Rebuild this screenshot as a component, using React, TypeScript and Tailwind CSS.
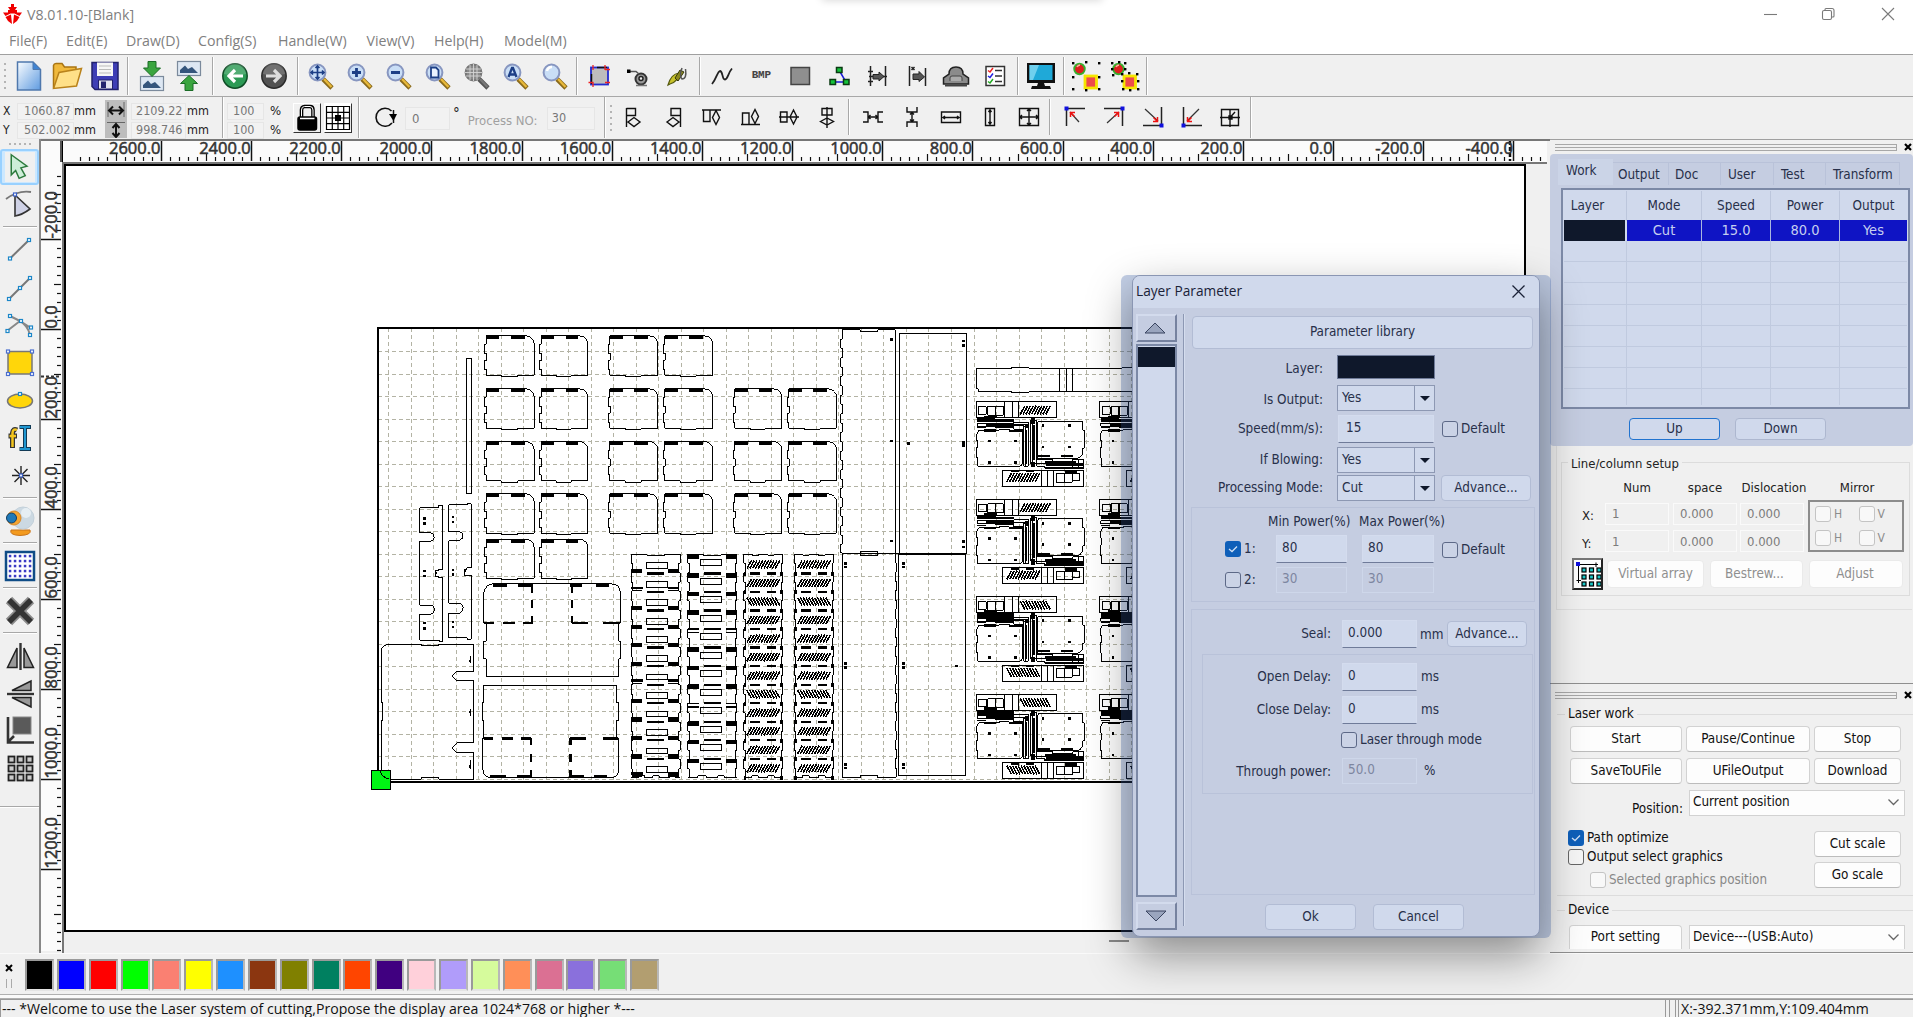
import React from "react";

type Kids = { children?: React.ReactNode };

/* ---------- shared helpers ---------- */

const Ico = ({ children, s = 32, className = "" }: Kids & { s?: number; className?: string }) => (
  <svg width={s} height={s} viewBox="0 0 32 32" className={"shrink-0 " + className} fill="none" stroke="#000" strokeWidth={1.5}>
    {children}
  </svg>
);

const Group = ({ children, className = "" }: Kids & { className?: string }) => (
  <div className={"flex h-full shrink-0 items-center " + className}>
    {React.Children.map(children, (c) => (
      <div className="flex flex-1 items-center justify-center">{c}</div>
    ))}
  </div>
);

const VSep = ({ className = "" }: { className?: string }) => (
  <div className={"w-[2px] shrink-0 border-l border-[#a8a8a8] bg-white " + className} />
);

const Dots = () => (
  <div className="flex h-full w-[10px] shrink-0 flex-col items-center justify-center gap-[4px]">
    {[0, 1, 2, 3, 4].map((i) => (
      <div key={i} className="h-[2px] w-[2px] bg-[#b4b4b4]" />
    ))}
  </div>
);

/* ---------- main toolbar icons ---------- */

const Magnifier = ({ kind }: { kind: string }) => {
  const gray = kind === "gray";
  const ink = "#1d3f86";
  return (
    <Ico>
      <path d="M18 19 L27 28" stroke={gray ? "#555" : "#8a6a1c"} strokeWidth={4.600} />
      <path d="M19 19 L26.500 27" stroke={gray ? "#777" : "#e8b93a"} strokeWidth={2.300} />
      <circle cx="12.500" cy="12.500" r="7.900" fill={gray ? "#8a8a8a" : "#c9def6"} stroke={gray ? "#777" : "#8796c0"} strokeWidth={2} />
      {kind === "move" && <path d="M12.500 6V19M6 12.500H19M10.500 8l2-2 2 2M10.500 17l2 2 2-2M8 10.500l-2 2 2 2M17 10.500l2 2-2 2" stroke={ink} strokeWidth={1.700} />}
      {kind === "plus" && <path d="M12.500 8V17M8 12.500H17" stroke={ink} strokeWidth={2.800} />}
      {kind === "minus" && <path d="M8 12.500H17" stroke={ink} strokeWidth={3} />}
      {kind === "page" && <path d="M9 7.500h5l2.500 2.500v7.500H9z" fill="#eaf3ff" stroke={ink} strokeWidth={1.800} />}
      {gray && <path d="M9 5V20M12.500 4V21M16 5V20M5 9H20M4 12.500H21M5 16H20" stroke="#d5d5d5" strokeWidth={0.900} />}
      {kind === "A" && <path d="M8.500 17 L12 8H13L16.500 17M10 14.500H15" stroke={ink} strokeWidth={2.300} />}
      {kind === "plain" && <path d="M8 11a5 5 0 0 1 5-4" stroke="#fff" strokeWidth={2.500} />}
    </Ico>
  );
};

const NewIcon = () => (
  <Ico>
    <defs>
      <linearGradient id="nw" x1="0" y1="0" x2="1" y2="1"><stop offset="0" stopColor="#fafdff" /><stop offset="1" stopColor="#5f9be0" /></linearGradient>
    </defs>
    <path d="M4.500 2H20L27.500 9.500V30H4.500Z" fill="url(#nw)" stroke="#4f78ad" />
    <path d="M20 2V9.500H27.500Z" fill="#3f83d2" stroke="#4f78ad" strokeWidth={1} />
  </Ico>
);
const OpenIcon = () => (
  <Ico>
    <path d="M2.500 28V5.500Q3 3.500 5 3.500H11L13.500 7H25V12" fill="#f0b93c" stroke="#a97412" />
    <path d="M2.500 28.500 8 12.500 30.500 8.500 25.500 26Z" fill="#ffe088" stroke="#b9821b" />
  </Ico>
);
const SaveIcon = () => (
  <Ico>
    <path d="M3 2.500H29V29.500H6L3 26.500Z" fill="#3d3db5" stroke="#20206c" />
    <path d="M8 2.500H24V16H8Z" fill="#f6f6f6" stroke="none" />
    <path d="M10 6H22M10 9.500H22M10 13H22" stroke="#bbb" strokeWidth={1} />
    <path d="M9.500 20H23.500V29H9.500Z" fill="#e3e3ef" stroke="#20206c" strokeWidth={1} />
    <path d="M12 21.500H17V28H12Z" fill="#23236e" stroke="none" />
  </Ico>
);
const Photo = ({ y }: { y: number }) => (
  <g transform={`translate(0 ${y})`}>
    <rect x="4.500" y="0.500" width="23" height="14" fill="#dde7f3" stroke="#7b8a9c" strokeWidth={1.200} />
    <path d="M7 12V9L12 4.500 15 8 19 6 25 12Z" fill="#34557c" stroke="none" />
  </g>
);
const ImportIcon = () => (
  <Ico>
    <Photo y={16} />
    <path d="M12 1.500H20V8H24.500L16 16.500 7.500 8H12Z" fill="#3aa53f" stroke="#1b6c26" strokeWidth={1} />
  </Ico>
);
const ExportIcon = () => (
  <Ico>
    <Photo y={1} />
    <path d="M12 30.500H20V23.500H24.500L16 15.500 7.500 23.500H12Z" fill="#3aa53f" stroke="#1b6c26" strokeWidth={1} />
  </Ico>
);
const Round = ({ back }: { back?: boolean }) => (
  <Ico>
    <circle cx="16" cy="16" r="12.200" fill={back ? "#2c9a55" : "#525252"} stroke={back ? "#0f4d26" : "#2b2b2b"} strokeWidth={1.500} />
    <path d="M5 14a11 11 0 0 1 22 0Q16 17 5 14" fill="#fff" opacity=".18" stroke="none" />
    <path d={back ? "M24 16H10M16 10 10 16 16 22" : "M8 16H22M16 10 22 16 16 22"} stroke={back ? "#fff" : "#ddd"} strokeWidth={3.200} />
  </Ico>
);
const HandleRect = () => (
  <Ico>
    <rect x="8" y="7.500" width="17" height="17" fill="#bdbdbd" stroke="#222bd0" strokeWidth={1.800} />
    <path d="M8.500 24V14M14 7.500H24" stroke="#111" />
    <path d="M10 5V10M22 5V10M10 22V27M5.500 22.500H10.500M22 9.500H27M22 22.500H27" stroke="#e22" strokeWidth={1.300} />
  </Ico>
);
const GearIcon = () => (
  <Ico>
    <circle cx="19" cy="19" r="5.500" fill="#999" stroke="#333" strokeWidth={2} />
    <circle cx="19" cy="18.500" r="2" fill="#eee" stroke="#222" />
    <path d="M7 11.500H14L17 14" stroke="#555" />
    <rect x="5" y="9.500" width="3.500" height="3.500" fill="#000" stroke="none" />
    <path d="M14 25.500H25" stroke="#777" strokeWidth={1.500} />
  </Ico>
);
const PenIcon = () => (
  <Ico>
    <path d="M7 25 Q10 14 18 13 Q18 21 9 24Z" fill="#c8c22a" stroke="#555a10" strokeWidth={1.200} />
    <path d="M14 18 L19 10 L23 12 L17 21Z" fill="#8d8a1c" stroke="#33360c" strokeWidth={1} />
    <path d="M21 8Q18 16 21 19Q26 19 24.500 9" stroke="#555" strokeWidth={1.500} />
  </Ico>
);
const CurveIcon = () => <Ico><path d="M6 24C11 18 11 12 14 11C17 11 16 20 19 19.500C22 19 22 13 26 8.500" stroke="#222" strokeWidth={1.800} /></Ico>;
const SquareIcon = () => <Ico><rect x="7" y="7.500" width="18.500" height="17" fill="#8f8f8f" stroke="#444" /></Ico>;
const NodesIcon = () => (
  <Ico>
    <path d="M16 10 L23 22 H8" stroke="#1b1bd8" strokeWidth={1.500} />
    {[[16, 10], [9.500, 22], [23, 22]].map(([x, y]) => (
      <rect key={x} x={x - 2.500} y={y - 2.500} width="5.500" height="5" fill="#16c33c" stroke="#0a3a12" strokeWidth={1.500} />
    ))}
  </Ico>
);
const PassIcon = ({ one }: { one?: boolean }) => (
  <Ico>
    {one ? (
      <>
        <path d="M8.500 6V26M24.500 8V26M10.500 7l3 3M13.500 7l-3 3" stroke="#222" />
        <path d="M12 14H18V11.500L23.500 17 18 21.500V19.500H12Z" fill="#555" stroke="#222" strokeWidth={1} />
      </>
    ) : (
      <>
        <path d="M8.500 6V26M23.500 6V26M7 16.500H25" stroke="#222" />
        <path d="M11 14.500H17V12L22 16.500 17 21V19H11Z" fill="#555" stroke="#222" strokeWidth={1} />
        <path d="M6 11.500h5M6 21.500h5" stroke="#222" />
      </>
    )}
  </Ico>
);
const CarIcon = () => (
  <Ico>
    <path d="M9 14Q9 7 16 7Q23 7 23 14L28.500 18V24H3.500V18Z" fill="#8b8b8b" stroke="#222" />
    <path d="M10 21V18Q10 16 12 16H20Q22 16 22 18V21" fill="#aaa" stroke="#444" strokeWidth={1} />
    <path d="M5 25.500h22" strokeWidth={2} stroke="#444" />
  </Ico>
);
const ListIcon = () => (
  <Ico>
    <rect x="7" y="6.500" width="18.500" height="19" fill="#fff" stroke="#333" />
    <path d="M16 10.500H23M16 16H23M16 21.500H23" stroke="#333" />
    <path d="M9 10.500l2 1.500 3-4" stroke="#e22" /><path d="M9 16l2 1.500 3-4" stroke="#22d" /><path d="M9 21.500l2 1.500 3-4" stroke="#2a2" />
  </Ico>
);
const MonitorIcon = () => (
  <Ico>
    <path d="M2 3H30V23H2Z" fill="#111" stroke="none" />
    <path d="M4.500 5H27.500V20H4.500Z" fill="#1fa9d8" stroke="none" />
    <path d="M4.500 5H14L8 20H4.500Z" fill="#6fd0ee" stroke="none" />
    <path d="M13 23H19L20 26H25L26 29H6L7 26H12Z" fill="#111" stroke="none" />
  </Ico>
);
const GroupIcon = ({ split }: { split?: boolean }) => (
  <Ico>
    <circle cx="9.500" cy="9" r="5.300" fill="#dd1f1f" stroke="#35b02d" strokeWidth={1.800} />
    <path d="M7 7a4 4 0 0 1 3-2" stroke="#ffb3a0" />
    <rect x="15" y="16" width="11.500" height="12" fill="#ee4b4b" stroke="#f5e600" strokeWidth={2.800} />
    {(split
      ? [[3, 3], [10, 2], [16, 3], [3, 9], [16, 9], [4, 15], [13, 14], [20, 13], [28, 14], [13, 21], [29, 21], [14, 29], [21, 30], [29, 29]]
      : [[3, 3], [16, 2], [29, 3], [3, 17], [29, 17], [3, 29], [16, 30], [29, 29]]
    ).map(([x, y]) => (
      <rect key={`${x}-${y}`} x={x - 1} y={y - 1} width="2.400" height="2.400" fill="#000" stroke="none" />
    ))}
  </Ico>
);

const MainToolbar = () => (
  <div className="flex h-[42px] shrink-0 items-center border-t border-[#a0a0a0] bg-[#f0f0f0]">
    <Dots />
    <Group className="w-[114px]"><NewIcon /><OpenIcon /><SaveIcon /></Group>
    <VSep className="ml-[3px] h-[38px]" />
    <Group className="ml-[4px] w-[74px]"><ImportIcon /><ExportIcon /></Group>
    <VSep className="ml-[5px] h-[38px]" />
    <Group className="ml-[1px] w-[78px]"><Round back /><Round /></Group>
    <VSep className="ml-[4px] h-[38px]" />
    <Group className="ml-[2px] w-[273px]">
      <Magnifier kind="move" /><Magnifier kind="plus" /><Magnifier kind="minus" /><Magnifier kind="page" />
      <Magnifier kind="gray" /><Magnifier kind="A" /><Magnifier kind="plain" />
    </Group>
    <VSep className="ml-[2px] h-[38px]" />
    <Group className="ml-[2px] w-[116px]"><HandleRect /><GearIcon /><PenIcon /></Group>
    <VSep className="ml-[3px] h-[38px]" />
    <Group className="ml-[2px] w-[311px]">
      <CurveIcon />
      <span className="font-['Liberation_Mono',monospace] text-[11px] font-bold tracking-[-0.2px] text-[#444]">BMP</span>
      <SquareIcon /><NodesIcon /><PassIcon /><PassIcon one /><CarIcon /><ListIcon />
    </Group>
    <VSep className="ml-[3px] h-[38px]" />
    <Group className="w-[44px]"><MonitorIcon /></Group>
    <VSep className="h-[38px]" />
    <Group className="ml-[1px] w-[78px]"><GroupIcon /><GroupIcon split /></Group>
    <VSep className="ml-[2px] h-[38px]" />
  </div>
);

/* ---------- property toolbar ---------- */

const Lines = ({ d, fill = "none" }: { d: string; fill?: string }) => (
  <Ico><path d={d} stroke="#111" strokeWidth={1.400} fill={fill} /></Ico>
);
const Corner = ({ frame, arrow, dot }: { frame: string; arrow: string; dot: [number, number] }) => (
  <Ico>
    <path d={frame} stroke="#222" />
    <path d={arrow} stroke="#333" strokeWidth={1.200} />
    <g transform={`translate(${dot[0] < 16 ? dot[0] + 4 : dot[0] - 4} ${dot[1] < 16 ? dot[1] + 4 : dot[1] - 4}) scale(${dot[0] < 16 ? 1 : -1} ${dot[1] < 16 ? 1 : -1})`}>
      <path d="M0 4.500V0H4.500M0 0L4 4" stroke="#e11" strokeWidth={1.500} />
    </g>
    <rect x={dot[0] - 2} y={dot[1] - 2} width="4" height="4" fill="#11d" stroke="none" />
  </Ico>
);

const NumBox = ({ children, className = "" }: Kids & { className?: string }) => (
  <div className={"flex shrink-0 items-center whitespace-nowrap border border-[#e6e6e6] bg-[#f2f2f2] text-[#777] " + className}>{children}</div>
);

const PropertyBar = () => (
  <div className="flex h-[43px] shrink-0 border-t border-[#a8a8a8] bg-[#f0f0f0] text-[13px] text-[#222]">
    <div className="flex w-[222px] shrink-0 text-[12.5px]">
      <div className="flex w-[105px] flex-col gap-px pt-[5px]">
        <div className="flex h-[18px] items-center"><span className="ml-[3px] w-[14px] text-[12px]">X</span><NumBox className="h-[17px] w-[57px] pl-[6px]">1060.87</NumBox><span>mm</span></div>
        <div className="flex h-[18px] items-center"><span className="ml-[3px] w-[14px] text-[12px]">Y</span><NumBox className="h-[17px] w-[57px] pl-[6px]">502.002</NumBox><span>mm</span></div>
      </div>
      <div className="mt-[3px] h-[38px] w-[22px] bg-[#bdbdbd]">
        <svg width="22" height="38" fill="none" stroke="#111" strokeWidth="2">
          <path d="M3 2V17M19 2V17" strokeWidth="1" stroke="#666" />
          <path d="M4 10.500H18M8 6.500L4 10.500L8 14.500M14 6.500L18 10.500L14 14.500" />
          <path d="M2 22.500H20" strokeWidth="1" stroke="#666" />
          <path d="M11 24V37M7.500 28L11 24L14.500 28M7.500 33L11 37L14.500 33" />
        </svg>
      </div>
      <div className="flex flex-col gap-px pt-[5px]">
        <div className="flex h-[18px] items-center"><NumBox className="ml-[4px] h-[17px] w-[55px] pl-[4px]">2109.22</NumBox><span className="ml-px">mm</span></div>
        <div className="flex h-[18px] items-center"><NumBox className="ml-[4px] h-[17px] w-[55px] pl-[4px]">998.746</NumBox><span className="ml-px">mm</span></div>
      </div>
    </div>
    <VSep className="h-[41px]" />
    <div className="flex w-[64px] shrink-0 flex-col gap-px pt-[5px]">
      {[0, 1].map((i) => (
        <div key={i} className="flex h-[18px] items-center"><NumBox className="ml-[3px] h-[17px] w-[37px] pl-[5px] text-[12.5px]">100</NumBox><span className="ml-[6px]">%</span></div>
      ))}
    </div>
    <div className="mt-[6px] ml-[5px] flex h-[30px] w-[28px] shrink-0 items-center justify-center border border-t-white border-r-[#333] border-b-[#333] border-l-white bg-[#f0f0f0]">
      <svg width="26" height="28" fill="none" stroke="#000" strokeWidth="1.500">
        <path d="M7.500 13V6Q7.500 2.500 10.500 2.500H16Q19 2.500 19 6V13" strokeWidth="3.600" />
        <path d="M7.500 13V6Q7.500 2.500 10.500 2.500H16Q19 2.500 19 6V13" stroke="#fff" strokeWidth="1" />
        <rect x="4" y="13" width="18.500" height="13" rx="2" fill="#000" />
        <path d="M6 14.500H20.500" stroke="#fff" />
      </svg>
    </div>
    <div className="mt-[6px] ml-[3px] flex h-[30px] w-[28px] shrink-0 items-center justify-center border border-t-white border-r-[#333] border-b-[#333] border-l-white bg-white">
      <svg width="26" height="28" fill="none" stroke="#000" strokeWidth="1.200">
        <path d="M1.500 2.500H24.500V25.500H1.500ZM7.300 2.500V25.500M13 2.500V25.500M18.700 2.500V25.500M1.500 8.300H24.500M1.500 14H24.500M1.500 19.700H24.500" />
        <rect x="10" y="11" width="6" height="6" fill="#000" stroke="none" />
      </svg>
    </div>
    <VSep className="ml-[6px] h-[41px]" />
    <Ico className="mt-[4px] ml-[9px]">
      <path d="M22.500 10A9 9 0 1 0 23 22" stroke="#111" strokeWidth={1.600} />
      <path d="M24.500 9V22" stroke="#111" strokeWidth={1.500} />
      <path d="M20 13H28L24.500 20Z" fill="#000" stroke="none" />
    </Ico>
    <NumBox className="mt-[10px] ml-[4px] h-[23px] w-[45px] pl-[6px] text-[13px]">0</NumBox>
    <span className="mt-[6px] ml-[3px] text-[15px]">°</span>
    <span className="mt-[14px] ml-[8px] w-[79px] whitespace-nowrap text-[13px] text-[#a0a0a0]">Process NO:</span>
    <NumBox className="mt-[10px] h-[23px] w-[48px] pl-[4px] text-[12.5px]">30</NumBox>
    <VSep className="ml-[9px] h-[41px]" />
    <Dots />
    <Group className="-ml-[1px] w-[232px] pb-[3px]">
      <Lines d="M8.500 7V26M8.500 7.500H17.500V14.500H8.500M10 21L16 16.500L22 21L16 25.500Z" />
      <Lines d="M23.500 7V26M23.500 7.500H14V14.500H23.500M10 21L16 16.500L22 21L16 25.500Z" />
      <Lines d="M7 9H26M8.500 9V20.500H15V9M21 9.500L17.500 16.500L21 23.500L24.500 16.500Z" />
      <Lines d="M7 23.500H26M8.500 23V12H15V23M21 8.500L17.500 15.500L21 22.500L24.500 15.500Z" />
      <Lines d="M6 16H26M7.500 11H14V21H7.500ZM20.500 9L17 16L20.500 23L24 16Z" />
      <Lines d="M16 6V27M11 7.500H21V14H11ZM9.500 20.500L16 17L22.500 20.500L16 24Z" />
    </Group>
    <VSep className="mt-[2px] ml-[1px] h-[36px]" />
    <Group className="ml-[4px] w-[195px] pb-[3px]">
      <Lines d="M6 11H11V21H6M26 11H21V21H26M11 16H21M13.500 14L11.500 16L13.500 18M18.500 14L20.500 16L18.500 18" />
      <Lines d="M11 6V11H21V6M11 26V21H21V26M16 11V21M14 13.500L16 11.500L18 13.500M14 18.500L16 20.500L18 18.500" />
      <Lines d="M6.500 11H25.500V21.500H6.500ZM8 16.500H24M10 15L8 16.500L10 18M22 15L24 16.500L22 18" />
      <Lines d="M11.500 7.500H20.500V24.500H11.500ZM16 9V23M14.500 11L16 9L17.500 11M14.500 21L16 23L17.500 21" />
      <Lines d="M6.500 7.500H25.500V24.500H6.500ZM16 8V24M7 16H25M14 10L16 8L18 10M14 22L16 24L18 22M9 14L7 16L9 18M23 14L25 16L23 18" />
    </Group>
    <VSep className="mt-[2px] h-[36px]" />
    <Group className="ml-[5px] w-[194px] pb-[3px]">
      <Corner frame="M7.500 25V7.500H26" arrow="M11 11L20 21" dot={[7.500, 7.500]} />
      <Corner frame="M24.500 25V7.500H6" arrow="M21 11L9 22" dot={[24.500, 7.500]} />
      <Corner frame="M24.500 6V24.500H6" arrow="M8 8L21 20" dot={[24.500, 24.500]} />
      <Corner frame="M7.500 6V24.500H26" arrow="M23 8L11 20" dot={[7.500, 24.500]} />
      <Lines d="M7.500 8.500H24.500V24.500H7.500ZM16 8V26M6 16.500H26M16 16.500L21 11M15 15h3v3h-3z" />
    </Group>
    <VSep className="h-[41px]" />
  </div>
);

/* ---------- left tool strip ---------- */

const Pt = ({ x, y, c = "#1b86c8" }: { x: number; y: number; c?: string }) => (
  <rect x={x - 1.500} y={y - 1.500} width="3" height="3" fill="#fff" stroke={c} strokeWidth={1.200} />
);
const ToolCell = ({ children, className = "h-[37.3px]" }: Kids & { className?: string }) => (
  <div className={"flex w-full shrink-0 items-center justify-center " + className}>{children}</div>
);
const HSep = () => <div className="mx-auto h-[2px] w-[34px] shrink-0 border-t border-[#a8a8a8] bg-white" />;

const LeftTools = () => (
  <div className="flex w-[41px] shrink-0 flex-col border-r-2 border-[#888] bg-[#f0f0f0]">
    <div className="flex h-[10px] shrink-0 items-center justify-center gap-[3px]">
      {[0, 1, 2, 3, 4].map((i) => <div key={i} className="h-[2px] w-[2px] bg-[#b4b4b4]" />)}
    </div>
    <div className="flex h-[36px] w-[39px] shrink-0 items-center justify-center rounded-[3px] border-2 border-[#99d1ff] bg-[#cce8ff]">
      <div className="flex h-[30px] w-[30px] items-center justify-center bg-[#f0f0f0]">
        <Ico s={28}>
          <path d="M6 2L24 15L17 17L22 26L15 29L11 20L6 25Z" fill="#cdeed8" stroke="#2c7a3d" strokeWidth={1.700} />
        </Ico>
      </div>
    </div>
    <ToolCell className="h-[41px] pb-[5px]">
      <Ico>
        <path d="M2 12Q14 3 27 5" stroke="#777" strokeWidth={1.800} />
        <path d="M11 8V29Q18 28 26 22Z" fill="#cfd2e6" stroke="#333" strokeWidth={1.600} />
        <Pt x={11} y={7.500} c="#3c62c8" />
      </Ico>
    </ToolCell>
    <HSep />
    <ToolCell className="h-[42px]"><Ico><path d="M6 25.500L25 7" stroke="#777" strokeWidth={2} /><Pt x={6} y={25.500} /><Pt x={25} y={7} /></Ico></ToolCell>
    <ToolCell><Ico><path d="M5 26L26 5" stroke="#777" strokeWidth={2} /><Pt x={5} y={26} /><Pt x={16} y={15} /><Pt x={26} y={5} /></Ico></ToolCell>
    <ToolCell><Ico><path d="M3 21L16 11L6 6M16 11Q24 16 26 25M16 11L27 18" stroke="#888" strokeWidth={2} /><Pt x={3.500} y={21} /><Pt x={6} y={6} /><Pt x={17} y={11} /><Pt x={27} y={17.500} /><Pt x={26} y={25} /></Ico></ToolCell>
    <ToolCell><Ico><rect x="4" y="4.500" width="24" height="22.500" fill="#ffd60a" stroke="#777" /><Pt x={4} y={4.500} c="#4a6fd0" /><Pt x={28} y={4.500} c="#4a6fd0" /><Pt x={4} y={27} c="#4a6fd0" /><Pt x={28} y={27} c="#4a6fd0" /></Ico></ToolCell>
    <ToolCell><Ico><ellipse cx="16" cy="16" rx="12.500" ry="7" fill="#ffd60a" stroke="#777" /><Pt x={16} y={9} /></Ico></ToolCell>
    <ToolCell>
      <Ico>
        <path d="M13 8Q9 6 8.500 11V26M4.500 14H13" stroke="#333" strokeWidth={5} />
        <path d="M13 8Q9 6 8.500 11V25M5.500 14H12" stroke="#f2c41d" strokeWidth={2.500} />
        <path d="M15.500 5H27M21 5V27M15.500 27H27" stroke="#123a55" strokeWidth={4} />
        <path d="M16 5H26M21 5V27M16 27H26" stroke="#1f96d0" strokeWidth={2} />
      </Ico>
    </ToolCell>
    <ToolCell className="h-[41px] pb-[3px]"><Ico><path d="M17 7V26M8 16.500H26M10.500 10L23.500 23M23.500 10L10.500 23" stroke="#222" strokeWidth={1.400} /><Pt x={17} y={16.500} c="#3c62c8" /></Ico></ToolCell>
    <HSep />
    <ToolCell className="h-[43px]">
      <Ico>
        <path d="M7 25H26Q28 30 16 30.500Q5 30 7 25" fill="#f39a1e" stroke="#c8741a" strokeWidth={1} />
        <circle cx="19" cy="13" r="11" fill="#ccd9e2" stroke="#c3d0da" strokeWidth={1} />
        <circle cx="22" cy="8" r="5" fill="#e6eef3" stroke="none" />
        <circle cx="10" cy="13" r="7" fill="#f6a531" stroke="#d98a2a" strokeWidth={1} />
        <circle cx="7.500" cy="13" r="5" fill="#1f79b8" stroke="#123f66" strokeWidth={1} />
      </Ico>
    </ToolCell>
    <HSep />
    <ToolCell className="h-[43px]">
      <Ico>
        <rect x="2" y="2" width="28" height="28" fill="#fff" stroke="#0f4c86" strokeWidth={2.500} />
        {[6, 11, 16, 21, 26].map((y) => [6, 11, 16, 21, 26].map((x) => <rect key={`${x}-${y}`} x={x - 1.200} y={y - 1.200} width="2.500" height="2.500" fill="#3b3bc4" stroke="none" />))}
      </Ico>
    </ToolCell>
    <HSep />
    <ToolCell className="h-[43px]">
      <Ico>
        <path d="M5 5L27 27M27 5L5 27" stroke="#8c8c8c" strokeWidth={9} />
        <path d="M5 5L27 27M27 5L5 27" stroke="#333" strokeWidth={5.500} />
      </Ico>
    </ToolCell>
    <HSep />
    <ToolCell className="h-[43px]"><Ico><path d="M16.500 3V30" strokeWidth={2.400} stroke="#333" /><path d="M13 8V27.500H3.500ZM20 8V27.500H29.500Z" fill="#999" stroke="#222" /></Ico></ToolCell>
    <ToolCell className="h-[34px]"><Ico><path d="M3 16H30" strokeWidth={2.400} stroke="#333" /><path d="M27 3V12.500H8ZM27 29V19.500H8Z" fill="#999" stroke="#222" /></Ico></ToolCell>
    <ToolCell className="h-[38px]"><Ico><rect x="9" y="3" width="18" height="17" fill="#5a5a5a" stroke="#888" strokeWidth={1} /><path d="M4 3V28.500H30M4 28L10 22" stroke="#333" strokeWidth={2.600} /></Ico></ToolCell>
    <ToolCell className="h-[38px]">
      <Ico>
        {[4.500, 13.500, 22.500].map((y) => [4.500, 13.500, 22.500].map((x) => <rect key={`${x}-${y}`} x={x} y={y} width="6" height="6" fill="#ccc" stroke="#222" strokeWidth={1.800} />))}
      </Ico>
    </ToolCell>
    <div className="mt-[19px] h-[2px] shrink-0 border-t border-[#a8a8a8] bg-white" />
  </div>
);

/* ---------- rulers ---------- */

const rulerText = "fill-[#333] font-['Open_Sans',sans-serif] text-[16.5px]";

const TopRuler = () => {
  const ticks = [];
  for (let v = 2800; v >= -460; v -= 20) {
    const x = 163 + (2600 - v) * 0.4508 - 65;
    if (x < 14 || x > 1481) continue;
    const major = v % 200 === 0;
    const mid = v % 100 === 0;
    ticks.push(<path key={v} d={`M${Math.round(x) + 0.5} ${major ? 0 : mid ? 13 : 16}V20`} stroke="#111" strokeWidth={major ? 1.500 : 1.200} />);
  }
  return (
    <svg width="1484" height="21" className="block shrink-0 overflow-visible bg-[#fbfbfb]">
      <path d="M1447 0V20" stroke="#111" strokeWidth="2.500" strokeDasharray="4 2" />
      {ticks}
      {Array.from({ length: 16 }, (_, i) => 2600 - i * 200).map((v) => (
        <text key={v} x={97.500 + (2600 - v) * 0.4508} y="13" textAnchor="end" stroke="#333" strokeWidth="0.550" className={rulerText}>
          {v.toFixed(1)}
        </text>
      ))}
    </svg>
  );
};

const SideRuler = () => {
  const ticks = [];
  for (let v = -340; v <= 1380; v += 20) {
    const y = 328.500 + v * 0.45 - 162;
    const major = v % 200 === 0;
    const mid = v % 100 === 0;
    ticks.push(<path key={v} d={`M${major ? 0 : mid ? 13 : 16} ${Math.round(y) + 0.5}H20`} stroke="#111" strokeWidth={major ? 1.500 : 1.200} />);
  }
  return (
    <svg width="21" height="789" className="block shrink-0 overflow-visible bg-[#fbfbfb]">
      {ticks}
      <path d="M0 214.500H20" stroke="#333" strokeWidth={2} strokeDasharray="3 2" />
      {Array.from({ length: 8 }, (_, i) => i * 200 - 200).map((v) => (
        <text key={v} transform={`translate(15.500 ${166.500 + v * 0.45}) rotate(-90)`} stroke="#333" strokeWidth="0.550" className={rulerText}>
          {v.toFixed(1)}
        </text>
      ))}
    </svg>
  );
};

/* ---------- cutting drawing ---------- */

const Plate = ({ x, y, w }: { x: number; y: number; w: number }) => (
  <g transform={`translate(${x} ${y})`}>
    <path d={`M0 0H${w - 24}Q${w} 4 ${w} 26V118H${w - 49}V122H46V118H0V100H-5V74H2V52H-5V26H0Z`} />
    <path d={`M0 6H40M74 6H${w - 28}`} strokeWidth={9} />
  </g>
);

const Hatch = ({ x, y, w = 100, h = 24, flip }: { x: number; y: number; w?: number; h?: number; flip?: boolean }) => {
  const n = Math.floor((w - 14) / 8.500);
  let d = "";
  for (let i = 0; i <= n; i++) {
    const a = x + i * 8.500;
    d += flip ? `M${a} ${y}l14 ${h}` : `M${a + 14} ${y}l-14 ${h}`;
  }
  return <path d={d} strokeWidth={4.600} />;
};

const squares = (pts: number[][], r = 4) =>
  pts.map(([x, y]) => <rect key={`${x},${y}`} x={x - r} y={y - r} width={r * 2} height={r * 2} fill="#000" stroke="none" />);

const wave = (x: number, y0: number, y1: number, a: number) => {
  let d = `M${x} ${y0}`;
  let s = 0;
  for (let y = y0; y < y1; y += 28) {
    d += `V${Math.min(y + 28, y1)}h${s ? -a : a}`;
    s = 1 - s;
  }
  return d;
};

const Cluster = ({ x, y, alt }: { x: number; y: number; alt?: boolean }) => (
  <g transform={`translate(${x} ${y})`}>
    <rect x="0" y="0" width="241" height="48" />
    <path d="M86 0V48M110 0V48M128 0V48M7 15H31V38H7ZM35 13H57V40H35ZM58 13H82V40H58Z" />
    <Hatch x={132} y={12} w={98} h={26} flip={alt} />
    <path d="M24 46H62M3 56H113" strokeWidth={alt ? 13 : 8} />
    <path d="M3 51H58V58H113M3 65H113V73H3ZM3 78H30" />
    <path d="M30 70H112" strokeWidth={7} />
    <path d="M113 61H158V69H113ZM113 70H142V82H113ZM58 76H112" />
    <path d="M24 86H60M100 87H142" strokeWidth={7} />
    <path d="M8 86H70V82H100V86H138V186Q136 194 128 194H5V168H1V138H5V116H1V98Z" />
    {squares([[40, 118], [118, 118], [40, 182], [118, 182]])}
    <path d="M143 74H157V194H143ZM148 74V194M164 56H182V186H164ZM170 56V186" />
    <path d="M150 84V186M173 70V176" strokeWidth={7} />
    <path d="M154 66V80M170 48V66M170 180V196" strokeWidth={12} />
    <path d="M186 58H320V86H324V140H320V155Q312 170 300 170H184V70Z" />
    {squares([[201, 72], [280, 72], [201, 136], [280, 136]])}
    <path d="M184 163H222M255 163H292" strokeWidth={6} />
    <path d="M182 172H230V178H290V172H323V200H206V194H182Z" />
    <path d="M206 181H300M210 190H323" strokeWidth={6} />
    <path d="M182 186H323M206 196H323M290 172V200M306 172V200" />
    <rect x="79" y="205" width="244" height="49" />
    <Hatch x={92} y={214} w={102} h={26} flip={alt} />
    <path d="M105 208H130M150 208H175M266 210H302" strokeWidth={8} />
    <path d="M195 205V254M215 205V254M233 205V254M240 216H264V241H240ZM264 216H288V241H264ZM289 216H311V236H289Z" />
  </g>
);

const rows12 = Array.from({ length: 12 }, (_, i) => i * 55.600);

const Drawing = () => {
  const cols = Array.from({ length: 36 }, (_, i) => 389.500 + i * 22.520);
  const rws = Array.from({ length: 20 }, (_, i) => 351.500 + i * 22.520);
  const plates: [number, number, number][] = [];
  [46, 205, 363, 520].forEach((y) => {
    plates.push([350, y, 144], [515, y, 140], [721, y, 144], [886, y, 144]);
    if (y > 46) plates.push([1096, y, 141], [1258, y, 143]);
  });
  plates.push([350, 656, 144], [515, 656, 140]);
  return (
    <svg width="1458" height="764" viewBox="67 166 1458 764" className="block" fill="none" stroke="#000" shapeRendering="crispEdges">
      <g stroke="#b3b3a4" strokeWidth="1" strokeDasharray="4 3">
        {cols.map((x) => <path key={x} d={`M${x} 328V782`} />)}
        {rws.map((y) => <path key={y} d={`M379 ${y}H1200`} />)}
      </g>
      <path d="M1200 328H379V782H1200" strokeWidth="2" />
      <g transform="translate(370.5 320.5) scale(.33333)" strokeWidth="3">
        {plates.map(([x, y, w]) => <Plate key={`${x}-${y}`} x={x} y={y} w={w} />)}
        <rect x="290" y="115" width="16" height="405" />
      </g>
      <g transform="translate(370.5 540.5) scale(.33333)" strokeWidth="3">
        <path d="M151 -98H208V-106H220V87H207V91H197V107H207V111H220V303H210V299H151V221H180Q194 221 194 207Q194 194 180 194H151V3H183Q194 0 194 -10Q194 -20 183 -23H151Z" />
        <path d="M238 -107H293V-110H306V82H292V86H285V104H306V296H293V292H238V218H270Q281 214 281 202Q281 190 268 188H238V0H268Q281 -4 281 -14Q279 -25 268 -27H238Z" />
        {squares([[165, -66], [165, -51], [165, 92], [165, 106], [165, 248], [165, 264], [251, -70], [251, -56], [251, 88], [251, 102], [251, 245], [251, 259], [200, 98], [286, 92], [302, 362], [302, 515], [302, 678]], 3.500)}
        <path d="M60 311H155V314H208V311H313V393H262L248 407L262 420H313V607H262L248 622L262 637H313V716H208V712H155V716H60Q35 710 35 690V540H40V487H35V330Q40 311 60 311ZM302 346V369M302 505V526M302 660V685" />
        <path d="M343 247V155Q350 130 370 130H725Q752 132 752 155V247H748V303H752V355H748V408H350V355H343V303H350V247Z" />
        <path d="M343 434H741V487H748V540H741V594H748V688Q746 712 720 712H370Q343 712 340 688V594H343V540H338V487H343Z" />
        <g strokeWidth="7">
          <path d="M370 135H414M447 135H490M343 248H373M401 248H436M460 248H490M488 135V158M488 178V202M488 226V249M603 135H638M680 135H718M608 135V158M608 178V202M608 226V249M608 248H655M702 248H752" />
          <path d="M343 594H370M397 594H430M455 594H486M484 594V615M484 640V664M484 688V710M362 708H410M442 708H486M603 594V615M603 640V664M603 688V710M603 594H650M700 594H745M603 708H645M675 708H714" />
        </g>
        <path d={wave(785, 41, 712, 4) + wave(932, 41, 712, -4) + "M785 41H832V45H886V41H932M785 712H806V706H826V712H850V706H870V712H900V706H918V712H932"} />
        <path d={wave(955, 41, 712, 4) + wave(1102, 41, 712, -4) + "M955 41H1002V45H1056V41H1102M955 712H985V706H1010V712H1045V706H1065V712H1102"} />
        {[1123, 1275].map((x) => (
          <path key={x} d={wave(x, 41, 712, 4) + wave(x + 117, 41, 712, -4) + `M${x} 41H${x + 25}V45H${x + 45}V41H${x + 72}V45H${x + 92}V41H${x + 117}M${x} 712H${x + 24}V706H${x + 44}V712H${x + 72}V706H${x + 92}V712H${x + 117}`} />
        ))}
        {rows12.map((o, i) => (
          <g key={o} transform={`translate(0 ${o})`}>
            <rect x="830" y="67" width="65" height="17" />
            {i < 11 && <path d="M832 99H885" strokeWidth="7" />}
            {i % 5 === 1 ? <path d="M787 85H817V89H787ZM787 95H817M897 85H925V89H897ZM897 95H925" strokeWidth="4.500" /> : <path d="M785 92H817M897 92H925" strokeWidth="13" />}
            <rect x="992" y="57" width="64" height="18" />
            {i < 11 && <path d="M1003 99H1055" strokeWidth="7" />}
            {i % 4 === 0 && i > 0 ? <path d="M955 44H990M955 54H990M1070 44H1102M1070 54H1102" strokeWidth="5" /> : <path d="M955 49H990M1070 49H1102" strokeWidth="13" />}
            {[1132, 1284].map((x) => (
              <g key={x}>
                <Hatch x={x} y={60} w={102} h={24} flip={i % 5 === 2} />
                {i < 11 && <path d={`M${x + 11} 99h30M${x + 62} 99h26`} strokeWidth="7" />}
                <path d={`M${x - 5} 94v12M${x + 105} 94v12`} strokeWidth="8" />
              </g>
            ))}
          </g>
        ))}
      </g>
      <g transform="translate(830.5 320.5) scale(.33333)" strokeWidth="3">
        <path d={wave(38, 28, 697, -4) + "M38 28H92V33H145V28H197V697M38 699H92V694H145V704H92V699M145 699H197"} />
        <rect x="210" y="40" width="200" height="660" />
        <path d="M40 699H410" strokeWidth="5" />
        <path d={"M40 699V1372H92V1366H145V1372H196" + wave(197, 699, 1372, 4)} />
        <rect x="208" y="703" width="200" height="661" />
        {squares([[186, 58], [186, 362], [186, 662], [402, 62], [402, 76], [402, 366], [402, 376], [402, 664], [402, 680], [238, 370], [49, 730], [49, 740], [49, 1030], [49, 1042], [49, 1332], [49, 1343], [222, 730], [222, 740], [222, 1030], [222, 1042], [222, 1332], [222, 1343], [382, 1037]])}
        <path d="M440 145H545V142H600V145H877V142H960M440 145V205H447V212H545V216H600V212H960M691 145V212M711 145V212M730 145V212" />
        {[0, 1, 2, 3].map((i) => (
          <g key={i}>
            <Cluster x={440} y={244 + i * 292.500} alt={i > 1} />
            <Cluster x={811} y={244 + i * 292.500} alt={i > 1} />
          </g>
        ))}
      </g>
      <rect x="372" y="770" width="19" height="19" fill="#00f514" strokeWidth="1" />
      <path d="M381 770Q382 777 390 779" strokeWidth="1" />
    </svg>
  );
};

/* ---------- form controls ---------- */

const Btn = ({ children, className = "" }: Kids & { className?: string }) => (
  <button className={"flex shrink-0 items-center justify-center whitespace-nowrap rounded-[4px] border border-[#d2d2d2] border-b-[#bcbcbc] bg-[#fdfdfd] " + className}>{children}</button>
);
const BlueBtn = ({ children, className = "" }: Kids & { className?: string }) => (
  <button className={"flex shrink-0 items-center justify-center whitespace-nowrap rounded-[4px] border bg-[#d0d9ec] " + className}>{children}</button>
);
const Check = ({ on, className = "border-[#666] bg-[#f6f6f6]" }: { on?: boolean; className?: string }) =>
  on ? (
    <div className="flex h-[16px] w-[16px] shrink-0 items-center justify-center rounded-[3px] bg-[#0f5fb9]">
      <svg width="10" height="8" fill="none" stroke="#cfe0f5" strokeWidth="1.300"><path d="M1 4L4 6.500L9 1.500" /></svg>
    </div>
  ) : (
    <div className={"h-[16px] w-[16px] shrink-0 rounded-[3px] border " + className} />
  );

/* ---------- right dock ---------- */

const Grip = () => (
  <div className="flex h-[14px] items-center">
    <div className="ml-[5px] h-[7px] w-[342px] border-y border-r border-[#a8a8a8] bg-[#f0f0f0] pt-[2px]"><div className="h-px bg-[#a8a8a8]" /></div>
    <svg width="9" height="8" className="ml-[7px]" stroke="#000" strokeWidth="2.200"><path d="M1 1L7 7M7 1L1 7" /></svg>
  </div>
);

const WorkPanel = () => (
  <div className="h-[292px] rounded-[4px] bg-[#c5cde1] pt-[5px] text-[13.4px] text-[#28304a]">
    <div className="ml-[8px] flex h-[26px] items-end">
      <div className="flex h-[26px] w-[55px] items-center border border-b-0 border-[#cbd4e7] bg-[#cbd4e7] pb-[2px] pl-[7px]">Work</div>
      {[["Output", "w-[56px] pl-[5px]"], ["Doc", "w-[52px] pl-[6px]"], ["User", "w-[53px] pl-[7px]"], ["Test", "w-[52px] pl-[7px]"], ["Transform", "w-[74px] pl-[7px]"]].map(([t, c]) => (
        <div key={t} className={"flex h-[23px] items-center border-t border-r border-[#b9c2d9] pt-[2px] " + c}>{t}</div>
      ))}
    </div>
    <div className="ml-[11px] mt-[3px] h-[221px] w-[349px] border-2 border-[#7c89a6] bg-[#d0d9ec] p-px">
      <div className="grid h-[29px] grid-cols-[63px_75px_69px_69px_1fr] text-center leading-[30px]">
        {["Layer", "Mode", "Speed", "Power", "Output"].map((t) => (
          <div key={t} className={"border-r border-[#bcc6dc] last:border-0 " + (t === "Layer" ? "pr-[15px]" : "")}>{t}</div>
        ))}
      </div>
      <div className="grid h-[21px] grid-cols-[63px_75px_69px_69px_1fr] text-center text-[14.5px] leading-[21px] text-[#c6cff0]">
        <div className="mr-[2px] bg-[#0f182b]" />
        {["Cut", "15.0", "80.0", "Yes"].map((t) => (
          <div key={t} className="border-r border-[#a9b6e0] bg-[#0f14c4] last:border-0">{t}</div>
        ))}
      </div>
      {Array.from({ length: 8 }, (_, r) => (
        <div key={r} className={"grid grid-cols-[63px_75px_69px_69px_1fr] " + (r < 7 ? "h-[21.2px] border-b border-[#c0cadf]" : "h-[16px]")}>
          {[0, 1, 2, 3, 4].map((c) => <div key={c} className="border-r border-[#c0cadf] last:border-0" />)}
        </div>
      ))}
    </div>
    <div className="mt-[9px] ml-[79px] flex gap-[15px]">
      <BlueBtn className="h-[22px] w-[91px] border-[#2173cf]">Up</BlueBtn>
      <BlueBtn className="h-[22px] w-[91px] border-[#adb7cf]">Down</BlueBtn>
    </div>
  </div>
);

const Fld = ({ children, className = "" }: Kids & { className?: string }) => (
  <div className={"flex h-[22px] items-center border border-[#fafafa] bg-[#f0f0f0] pl-[6px] text-[#7c7c7c] " + className}>{children}</div>
);

const LineColumn = () => (
  <div className="mr-[1px] ml-[6px] h-[164px] border-b border-l border-[#e0e0e0] text-[13px] text-[#222]">
    <fieldset className="relative mx-0 ml-[4px] h-[150px] w-[349px] pt-[32px]">
      <div className="absolute inset-x-0 top-[16px] bottom-0 border border-[#dcdcdc]" />
      <div className="absolute top-[9px] left-[7px] bg-[#f0f0f0] px-[3px] leading-[18px]">Line/column setup</div>
      <div className="relative flex h-[20px] items-center pl-[61px]">
        <span className="w-[30px] text-center">Num</span><span className="ml-[33px] w-[40px] text-center">space</span>
        <span className="ml-[13px] w-[72px] text-center">Dislocation</span><span className="ml-[26px] w-[42px] text-center">Mirror</span>
      </div>
      <div className="relative mt-[2px] flex">
        <div className="flex flex-col gap-[4px] pt-[2px]">
          {["X:", "Y:"].map((l) => (
            <div key={l} className="flex items-center">
              <span className="w-[44px] pl-[21px] pt-[4px] font-medium">{l}</span>
              <Fld className="w-[64px]">1</Fld><Fld className="ml-[4px] w-[64px]">0.000</Fld><Fld className="ml-[3px] w-[64px]">0.000</Fld>
            </div>
          ))}
        </div>
        <div className="ml-[4px] grid h-[52px] w-[96px] grid-cols-2 border-2 border-[#8c8c8c] pl-[5px] text-[12px] text-[#8c8c8c]">
          {["H", "V", "H", "V"].map((l, i) => (
            <div key={i} className="flex items-center gap-[3px]"><Check className="border-[#c4c4c4] bg-[#f8f8f8]" />{l}</div>
          ))}
        </div>
      </div>
      <div className="relative mt-[5px] ml-[11px] flex items-center text-[13.4px] text-[#8f8f8f]">
        <svg width="31" height="32" className="shrink-0 border-2 border-t-[#777] border-r-[#222] border-b-[#222] border-l-[#777] bg-white" stroke="#000" fill="none">
          <path d="M4.500 3V23M4 4.500H24M22 2.500V7M2.500 20.500H7" />
          {[8, 15, 22].map((y) => [8, 15.500, 23].map((x) => <rect key={`${x}-${y}`} x={x} y={y} width="4" height="4" fill="#19c8c8" strokeWidth="1.200" />))}
          <rect x="2" y="2" width="4" height="4" fill="#11d" stroke="none" />
        </svg>
        <Btn className="ml-[4px] h-[28px] w-[97px] border-[#eaeaea] border-b-[#eaeaea] bg-[#f8f8f8]">Virtual array</Btn>
        <Btn className="ml-[6px] h-[28px] w-[93px] border-[#eaeaea] border-b-[#eaeaea] bg-[#f8f8f8] pr-[4px]">Bestrew...</Btn>
        <Btn className="ml-[6px] h-[28px] w-[94px] border-[#eaeaea] border-b-[#eaeaea] bg-[#f8f8f8] pr-[2px]">Adjust</Btn>
      </div>
    </fieldset>
  </div>
);

const Select = ({ children, className = "" }: Kids & { className?: string }) => (
  <div className={"flex w-[216px] shrink-0 items-center justify-between border border-[#d2d2d2] bg-[#fdfdfd] pr-[5px] pl-[3px] " + className}>
    {children}
    <svg width="11" height="7" fill="none" stroke="#666" strokeWidth="1.300"><path d="M0.500 0.500L5.500 5.500L10.500 0.500" /></svg>
  </div>
);

const Caption = ({ children }: Kids) => (
  <div className="flex h-[18px] items-center">
    <div className="h-px w-[8px] bg-[#dcdcdc]" /><span className="px-[3px]">{children}</span><div className="h-px flex-1 bg-[#dcdcdc]" />
  </div>
);

const LaserWork = () => (
  <div className="text-[13.4px] text-[#111]">
    <div className="ml-[7px]"><Caption>Laser work</Caption></div>
    <div className="ml-[20px]">
      <div className="mt-[3px] flex gap-[4px]"><Btn className="h-[26px] w-[112px]">Start</Btn><Btn className="h-[26px] w-[124px]">Pause/Continue</Btn><Btn className="h-[26px] w-[87px]">Stop</Btn></div>
      <div className="mt-[6px] flex gap-[4px]"><Btn className="h-[26px] w-[112px]">SaveToUFile</Btn><Btn className="h-[26px] w-[124px]">UFileOutput</Btn><Btn className="h-[26px] w-[87px]">Download</Btn></div>
      <div className="mt-[6px] flex"><span className="w-[119px] pt-[10px] pr-[6px] text-right leading-[18px]">Position:</span><Select className="h-[26px] pb-[1px]">Current position</Select></div>
      <div className="mt-[11px] flex h-[68px]">
        <div className="-ml-[2px] w-[246px] text-[13.3px] whitespace-nowrap">
          <div className="flex h-[18px] items-center gap-[3px]"><Check on />Path optimize</div>
          <div className="flex h-[20px] items-center gap-[3px]"><Check />Output select graphics</div>
          <div className="mt-[3px] ml-[22px] flex h-[19px] items-center gap-[3px] text-[#888]"><Check className="border-[#c4c4c4] bg-[#f8f8f8]" />Selected graphics position</div>
        </div>
        <div className="mt-[2px] flex flex-col gap-[5px]"><Btn className="h-[26px] w-[87px]">Cut scale</Btn><Btn className="h-[26px] w-[87px]">Go scale</Btn></div>
      </div>
    </div>
    <div className="-mt-[2px] ml-[7px] h-px bg-[#dcdcdc]" />
    <div className="mt-[5px] ml-[7px]"><Caption>Device</Caption></div>
    <div className="mt-[6px] ml-[19px] flex h-[24px] gap-[7px]"><Btn className="h-[24px] w-[113px] rounded-b-none border-b-0">Port setting</Btn><Select className="h-[24px] border-b-0">Device---(USB:Auto)</Select></div>
  </div>
);

/* ---------- layer dialog ---------- */

const Lab = ({ children, className = "w-[132px]" }: Kids & { className?: string }) => (
  <span className={"shrink-0 text-right whitespace-nowrap " + className}>{children}</span>
);
const Inp = ({ children, off, className = "" }: Kids & { off?: boolean; className?: string }) => (
  <div className={"flex shrink-0 items-center border pb-[2px] pl-[5px] " + (off ? "border-[#ced7ea] bg-[#c5cde1] text-[#7d86a0] " : "border-[#d4dcee] border-b-[#6f7b99] bg-[#d0d9ec] ") + className}>{children}</div>
);
const Combo = ({ children, className = "" }: Kids & { className?: string }) => (
  <div className={"ml-[14px] flex w-[98px] shrink-0 border border-[#8d98b3] bg-[#d0d9ec] " + className}>
    <span className="flex flex-1 items-center pl-[4px]">{children}</span>
    <span className="flex w-[20px] items-center justify-center border-l border-[#8d98b3]">
      <svg width="10" height="5"><path d="M0 0H10L5 5Z" fill="#0f182b" /></svg>
    </span>
  </div>
);
const DChk = ({ on }: { on?: boolean }) => <Check on={on} className="border-[#5d6987] bg-[#cbd3e6]" />;

const LayerDialog = () => (
  <div className="absolute top-[275px] left-[1121px] h-[663px] w-[430px] rounded-[6px] bg-[#3a62ae]/30 pl-[11px] text-[13.4px] text-[#28304a]">
    <div className="flex h-[662px] w-[408px] flex-col rounded-[8px] border border-[#8a96b3] bg-[#c5cde1] shadow-[0_18px_45px_rgba(0,0,0,0.42)]">
      <div className="flex h-[32px] items-center justify-between rounded-t-[7px] bg-[#d0d9ec] pr-[14px] pb-px pl-[3px] font-['Open_Sans',sans-serif] text-[13.7px] text-[#1a2238]">
        Layer Parameter
        <svg width="13" height="13" stroke="#1a2238" strokeWidth="1.300"><path d="M0.500 0.500L12.500 12.500M12.500 0.500L0.500 12.500" /></svg>
      </div>
      <div className="flex flex-1 pt-[6px]">
        <div className="ml-[3px] flex w-[41px] flex-col">
          <div className="flex h-[28px] items-center justify-center border-2 border-t-[#d3dbed] border-r-[#76829f] border-b-[#76829f] border-l-[#d3dbed]">
            <svg width="22" height="12" className="-ml-[3px]"><path d="M1 11H21L11 1Z" fill="#9aa5be" stroke="#3a4560" /></svg>
          </div>
          <div className="mt-[2px] h-[553px] border-2 border-[#7c89a6] bg-[#d0d9ec] pt-px"><div className="h-[20px] w-full bg-[#0f182b]" /></div>
          <div className="mt-[5px] flex h-[28px] items-center justify-center border-2 border-t-[#d3dbed] border-r-[#76829f] border-b-[#76829f] border-l-[#d3dbed]">
            <svg width="22" height="12" className="-ml-[2px]"><path d="M1 1H21L11 11Z" fill="#9aa5be" stroke="#3a4560" /></svg>
          </div>
        </div>
        <div className="ml-[6px] h-[612px] w-[2px] border-l border-[#8d98b3] bg-[#d5ddee]" />
        <div className="ml-[6px] w-[343px]">
          <BlueBtn className="mt-[2px] ml-px h-[33px] w-[341px] border-[#b2bcd4]">Parameter library</BlueBtn>
          <div className="mt-[6px] flex h-[24px] items-center"><Lab className="w-[132px] pt-[5px]">Layer:</Lab><div className="ml-[14px] h-[24px] w-[98px] border border-[#6f7b99] bg-[#0f182b]" /></div>
          <div className="mt-[6px] flex h-[26px] items-center"><Lab className="w-[132px] pt-[4px]">Is Output:</Lab><Combo className="h-[26px]">Yes</Combo></div>
          <div className="mt-[4px] flex h-[28px] items-center"><Lab>Speed(mm/s):</Lab><Inp className="ml-[15px] h-[28px] w-[96px] pl-[7px]">15</Inp><div className="ml-[8px] flex items-center gap-[3px]"><DChk />Default</div></div>
          <div className="mt-[4px] flex h-[26px] items-center"><Lab>If Blowing:</Lab><Combo className="h-[26px]">Yes</Combo></div>
          <div className="mt-[2px] flex h-[26px] items-center"><Lab>Processing Mode:</Lab><Combo className="h-[26px]">Cut</Combo><BlueBtn className="ml-[6px] h-[26px] w-[90px] border-[#b2bcd4]">Advance...</BlueBtn></div>
          <div className="mt-[6px] h-[95px] w-[344px] border border-[#b9c2d9] pt-[5px]">
            <div className="flex h-[18px] items-center pl-[76px] whitespace-nowrap"><span className="w-[91px]">Min Power(%)</span><span>Max Power(%)</span></div>
            <div className="mt-[4px] flex h-[28px] items-center pl-[33px]"><DChk on /><span className="w-[35px] pl-[3px] pt-px">1:</span><Inp className="h-[28px] w-[71px]">80</Inp><Inp className="ml-[15px] h-[28px] w-[72px]">80</Inp><div className="ml-[8px] flex items-center gap-[3px] pt-[3px]"><DChk />Default</div></div>
            <div className="mt-[4px] flex h-[26px] items-center pl-[33px]"><DChk /><span className="w-[35px] pl-[3px]">2:</span><Inp off className="h-[26px] w-[71px]">30</Inp><Inp off className="ml-[15px] h-[26px] w-[72px]">30</Inp></div>
          </div>
          <div className="mt-[7px] h-[286px] w-[344px] border border-[#b9c2d9] pt-[10px]">
            <div className="flex h-[28px] items-center"><Lab className="w-[139px] pt-[1px]">Seal:</Lab><Inp className="ml-[11px] h-[28px] w-[75px]">0.000</Inp><span className="ml-[3px] w-[27px] pt-[3px]">mm</span><BlueBtn className="h-[26px] w-[80px] border-[#b2bcd4]">Advance...</BlueBtn></div>
            <div className="mt-[6px] ml-[10px] h-[140px] w-[331px] border border-[#b9c2d9] pt-[8px]">
              <div className="flex h-[28px] items-center"><Lab className="w-[128px] pt-[1px]">Open Delay:</Lab><Inp className="ml-[11px] h-[28px] w-[75px]">0</Inp><span className="ml-[4px] pt-[1px]">ms</span></div>
              <div className="mt-[5px] flex h-[28px] items-center"><Lab className="w-[128px] pt-[1px]">Close Delay:</Lab><Inp className="ml-[11px] h-[28px] w-[75px]">0</Inp><span className="ml-[4px] pt-[1px]">ms</span></div>
              <div className="mt-[7px] ml-[138px] flex h-[18px] items-center gap-[3px] whitespace-nowrap"><DChk />Laser through mode</div>
              <div className="mt-[9px] flex h-[26px] items-center"><Lab className="w-[128px] pt-[2px]">Through power:</Lab><Inp off className="ml-[11px] h-[26px] w-[75px]">50.0</Inp><span className="ml-[7px] pt-[1px]">%</span></div>
            </div>
          </div>
          <div className="mt-[9px] ml-[74px] flex gap-[17px]"><BlueBtn className="h-[26px] w-[91px] border-[#b2bcd4]">Ok</BlueBtn><BlueBtn className="h-[26px] w-[91px] border-[#b2bcd4]">Cancel</BlueBtn></div>
        </div>
      </div>
    </div>
  </div>
);

/* ---------- palette ---------- */

const palette = ["bg-[#000000]", "bg-[#0000ff]", "bg-[#ff0000]", "bg-[#00ff00]", "bg-[#fa8072]", "bg-[#ffff00]", "bg-[#1e90ff]", "bg-[#8b3610]", "bg-[#808000]", "bg-[#008060]", "bg-[#ff4500]", "bg-[#400080]", "bg-[#ffd0da]", "bg-[#b09cfa]", "bg-[#d6fb9c]", "bg-[#ff8f58]", "bg-[#db7093]", "bg-[#8a70dc]", "bg-[#76de76]", "bg-[#b29e70]"];

export default function App() {
  return (
    <div className="relative flex h-[1017px] w-[1913px] flex-col overflow-hidden bg-[#f0f0f0] font-['DejaVu_Sans_Condensed','DejaVu_Sans',sans-serif]">
      <div className="flex h-[28px] shrink-0 items-center bg-white font-['Open_Sans',sans-serif] text-[14.2px] text-[#808080]">
        <svg width="22" height="22" viewBox="0 0 22 22" className="ml-[1px]" fill="#f00000">
          <path d="M10 1H13V4H16L14 7H16V9.500H21L18.500 13L13.500 10.500H9.500L4.500 13L2 9.500H7V7H9L7 4H10ZM4.500 14L10 11.500L11 21L7 18ZM18.500 14L13 11.500L12 21L16 18Z" />
        </svg>
        <span className="ml-[4px] pt-[1px]">V8.01.10-[Blank]</span>
        <div className="ml-auto flex items-center pr-[18px]">
          <svg width="132" height="14" fill="none" stroke="#7a7a7a" strokeWidth="1.100">
            <path d="M1 7.500H14" />
            <rect x="59.500" y="3.500" width="9" height="9" rx="1.500" /><path d="M62 3V2.500Q62 1.500 63 1.500H69Q71 1.500 71 3.500V9Q71 10 70 10H69" />
            <path d="M119 1L131 13M131 1L119 13" />
          </svg>
        </div>
      </div>
      <div className="absolute -top-[8px] left-[822px] h-[8px] w-[280px] shadow-[0_0_8px_rgba(0,0,0,0.18)]" />
      <div className="flex h-[26px] shrink-0 items-center bg-white pl-[9px] font-['Open_Sans',sans-serif] text-[14.2px] text-[#808080]">
        {[["File(F)", "w-[57px]"], ["Edit(E)", "w-[60px]"], ["Draw(D)", "w-[72px]"], ["Config(S)", "w-[80px]"], ["Handle(W)", "w-[88.5px]"], ["View(V)", "w-[67.5px]"], ["Help(H)", "w-[70px]"], ["Model(M)", "w-[80px]"]].map(([t, w]) => (
          <span key={t} className={w}>{t}</span>
        ))}
      </div>
      <MainToolbar />
      <PropertyBar />
      <div className="flex h-[814px] shrink-0">
        <LeftTools />
        <div className="flex w-[1509px] shrink-0 flex-col border-t-2 border-[#777] pr-[3px]">
          <div className="flex h-[21px] shrink-0">
            <div className="w-[21px] bg-[#fbfbfb]" />
            <div className="w-[3px] border-l-2 border-[#555] bg-black" />
            <TopRuler />
          </div>
          <div className="flex h-[791px]">
            <SideRuler />
            <div className="h-[791px] w-[1485px] border-t-2 border-l-2 border-[#777]">
              <div className="w-[1462px] border-2 border-black bg-white"><Drawing /></div>
              <div className="mt-[8px] ml-[1045px] h-[2px] w-[20px] bg-[#888]" />
            </div>
          </div>
        </div>
        <div className="w-[363px] shrink-0">
          <div className="h-px bg-[#a0a0a0]" />
          <div className="flex h-[14px] items-end"><Grip /></div>
          <WorkPanel />
          <LineColumn />
          <div className="mt-[73px] h-px bg-[#8f8f8f]" />
          <div className="mt-[4px]"><Grip /></div>
          <div className="mt-[3px]"><LaserWork /></div>
          <div className="mt-[3px] h-px bg-[#8f8f8f]" />
        </div>
      </div>
      <div className="flex h-[41px] shrink-0 border-t border-[#fafafa] pt-[5px]">
        <div className="flex w-[25px] flex-col items-center pt-[5px] pr-[7px]">
          <svg width="8" height="8" stroke="#000" strokeWidth="2"><path d="M1 1L7 7M7 1L1 7" /></svg>
          <div className="mt-[7px] h-[9px] w-[6px] border-x border-[#aaa]" />
        </div>
        {palette.map((c) => (
          <div key={c} className={"mr-[2.85px] h-[32px] w-[29px] shrink-0 border-2 border-t-[#9a9a9a] border-l-[#9a9a9a] border-r-[#b8b8b8] border-b-[#e4e4e4] " + c} />
        ))}
      </div>
      <div className="h-[5px] shrink-0 border-y border-[#b0b0b0] bg-[#fafafa]" />
      <div className="flex h-[18px] shrink-0 border-t border-[#999] font-['Open_Sans',sans-serif] text-[14.1px] leading-[18px] whitespace-nowrap text-[#111]">
        <div className="w-[1666px] border-x border-[#999] pl-[1px]">--- *Welcome to use the Laser system of cutting,Propose the display area 1024*768 or higher *---</div>
        <div className="ml-[3px] w-[7px] border-x border-[#999]" />
        <div className="ml-[2px] flex-1 border-l border-[#999] pl-[2px]">X:-392.371mm,Y:109.404mm</div>
      </div>
      <LayerDialog />
    </div>
  );
}
